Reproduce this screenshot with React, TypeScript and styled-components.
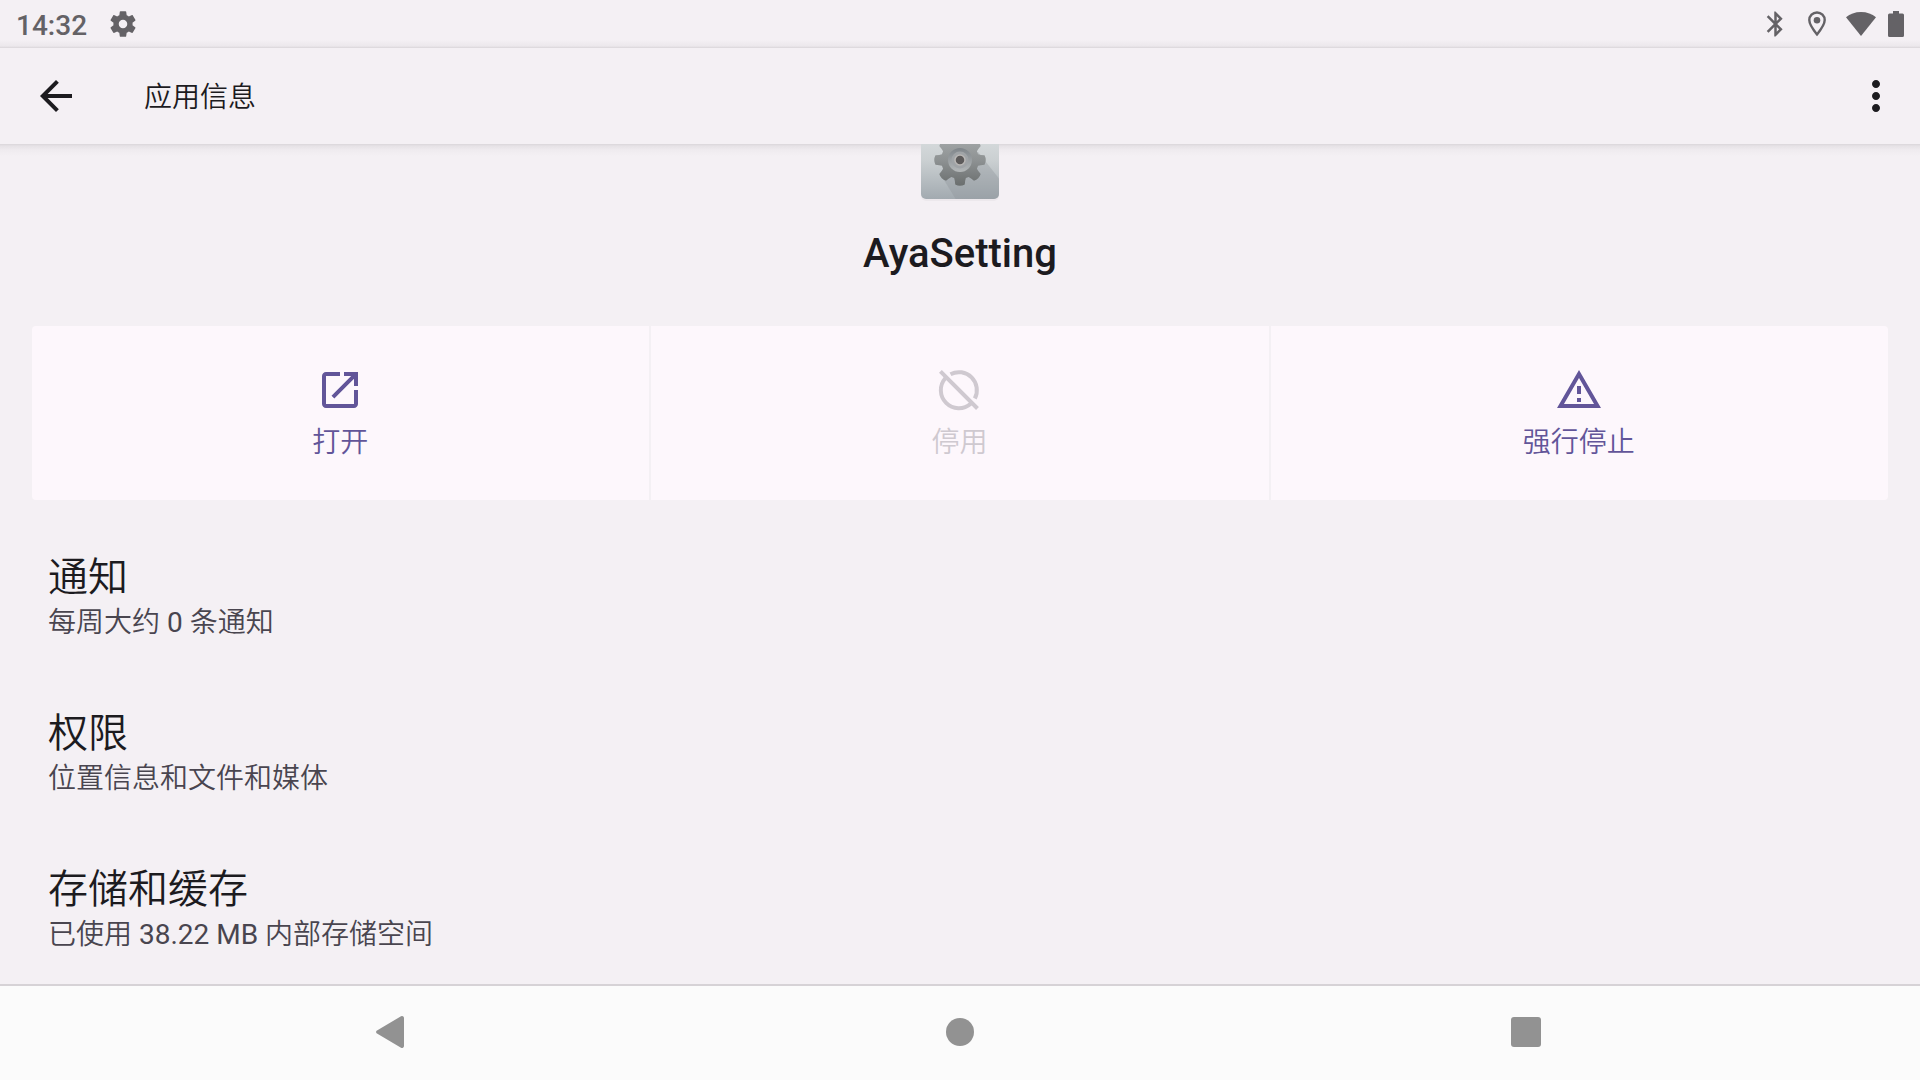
import React from "react";
import styled, { createGlobalStyle } from "styled-components";

const GlobalStyle = createGlobalStyle`
  * { box-sizing: border-box; }
  html, body, #root { height: 100%; margin: 0; }
  body {
    background: #f4f0f4;
    color: #1c1b1f;
    font-family: Roboto, "Noto Sans CJK SC DemiLight", "Noto Sans CJK SC", sans-serif;
  }
  button { font: inherit; color: inherit; background: none; border: 0; padding: 0; }
  svg { display: block; flex: none; }
`;

const Screen = styled.div`
  display: flex;
  flex-direction: column;
  height: 100vh;
  overflow: hidden;
`;

const StatusBar = styled.header`
  display: flex;
  align-items: center;
  justify-content: space-between;
  flex: none;
  height: 48px;
  padding: 0 16px;
  color: #646266;
  background: linear-gradient(#f4f0f4 40px, #ece8ec 46px, #d9d5d9 48px);
`;

const StatusGroup = styled.div<{ $gap: number }>`
  display: flex;
  align-items: center;
  gap: ${(p) => p.$gap}px;
`;

const Clock = styled.time`
  font-size: 28px;
  font-weight: 500;
  line-height: 32px;
  padding-top: 4px;
`;

const AppBar = styled.nav`
  display: flex;
  align-items: center;
  flex: none;
  height: 96px;
  padding: 0 20px 0 32px;
`;

const BarTitle = styled.h1`
  flex: 1;
  margin: 0;
  padding: 4px 0 0 64px;
  font-size: 28px;
  font-weight: 350;
  line-height: 40px;
`;

const IconButton = styled.button`
  display: flex;
  align-items: center;
  justify-content: center;
  width: 48px;
  height: 48px;
`;

const Content = styled.main`
  flex: 1;
  min-height: 0;
  overflow: hidden;
  padding: 0 32px;
  background: linear-gradient(#dad6da 0, #e6e2e6 2px, #efebef 6px, #f4f0f4 12px);
`;

const AppHeader = styled.section`
  display: flex;
  flex-direction: column;
  align-items: center;
`;

const IconWindow = styled.div`
  display: flex;
  align-items: flex-end;
  height: 64px;
  overflow: hidden;
`;

const AppName = styled.h2`
  margin: 20px 0 46px;
  font-size: 40px;
  font-weight: 500;
  line-height: 52px;
`;

const Actions = styled.div`
  display: grid;
  grid-template-columns: repeat(3, 1fr);
  gap: 2px;
  height: 174px;
  border-radius: 4px;
  overflow: hidden;
`;

const Action = styled.button`
  && { padding: 40px 1px 0 0; }
  display: flex;
  flex-direction: column;
  align-items: center;
  background: #fdf7fc;
  color: #625599;
  font-size: 28px;
  font-weight: 350;
  line-height: 42px;
  gap: 8px;

  &:disabled { color: #cfc9d0; }
`;

const Preferences = styled.ul`
  list-style: none;
  margin: 0;
  padding: 22px 0 0;
`;

const Preference = styled.li`
  padding: 32px 16px;
  height: 156px;
`;

const PrefTitle = styled.div`
  font-size: 40px;
  font-weight: 350;
  line-height: 48px;
`;

const PrefSummary = styled.div`
  font-size: 28px;
  line-height: 42px;
  color: #49454f;
`;

const NavBar = styled.footer`
  display: flex;
  align-items: center;
  justify-content: center;
  flex: none;
  height: 96px;
  padding-bottom: 2px;
  border-top: 2px solid #d6d2d6;
  background: #fbfbfb;
  color: #929292;
`;

const NavButton = styled.button`
  display: flex;
  align-items: center;
  justify-content: center;
  width: 29.5%;
  height: 100%;
`;

const GlyphSvg = styled.svg.attrs<{ $size: number }>((p) => ({
  viewBox: "0 0 24 24",
  width: p.$size,
  height: p.$size,
  fill: "currentColor",
  "aria-hidden": true,
}))<{ $size: number }>``;

const Glyph = ({ d, size = 48 }: { d: string; size?: number }) => (
  <GlyphSvg $size={size}><path d={d} /></GlyphSvg>
);

const paths = {
  gear: "M19.14 12.94c.04-.3.06-.61.06-.94 0-.32-.02-.64-.07-.94l2.03-1.58c.18-.14.23-.41.12-.61l-1.92-3.32c-.12-.22-.37-.29-.59-.22l-2.39.96c-.5-.38-1.03-.7-1.62-.94l-.36-2.54c-.04-.24-.24-.41-.48-.41h-3.84c-.24 0-.43.17-.47.41l-.36 2.54c-.59.24-1.13.57-1.62.94l-2.39-.96c-.22-.08-.47 0-.59.22L2.74 8.87c-.12.21-.08.47.12.61l2.03 1.58c-.05.3-.09.63-.09.94s.02.64.07.94l-2.03 1.58c-.18.14-.23.41-.12.61l1.92 3.32c.12.22.37.29.59.22l2.39-.96c.5.38 1.03.7 1.62.94l.36 2.54c.05.24.24.41.48.41h3.84c.24 0 .44-.17.47-.41l.36-2.54c.59-.24 1.13-.56 1.62-.94l2.39.96c.22.08.47 0 .59-.22l1.92-3.32c.12-.22.07-.47-.12-.61l-2.01-1.58zM12 15.2c-1.76 0-3.2-1.44-3.2-3.2s1.44-3.2 3.2-3.2 3.2 1.44 3.2 3.2-1.44 3.2-3.2 3.2z",
  back: "M20 11H7.83l5.59-5.59L12 4l-8 8 8 8 1.41-1.41L7.83 13H20v-2z",
  more: "M12 8c1.1 0 2-.9 2-2s-.9-2-2-2-2 .9-2 2 .9 2 2 2zm0 2c-1.1 0-2 .9-2 2s.9 2 2 2 2-.9 2-2-.9-2-2-2zm0 6c-1.1 0-2 .9-2 2s.9 2 2 2 2-.9 2-2-.9-2-2-2z",
  bluetooth: "M17.71 7.71L12 2h-1v7.59L6.41 5 5 6.41 10.59 12 5 17.59 6.41 19 11 14.41V22h1l5.71-5.71-4.3-4.29 4.3-4.29zM13 5.83l1.88 1.88L13 9.59V5.83zm1.88 10.46L13 18.17v-3.76l1.88 1.88z",
  open: "M12 3V5H5V19H19V12H21V19C21 20.1 20.1 21 19 21H5C3.9 21 3 20.1 3 19V5C3 3.9 3.9 3 5 3H12ZM14 3H21V10H19V6.41L9.17 16.24L7.76 14.83L17.59 5H14V3Z",
  warning: "M12 5.99L19.53 19H4.47L12 5.99M12 2L1 21h22L12 2zm1 14h-2v2h2v-2zm0-6h-2v4h2v-4z",
};

const BluetoothIcon = () => (
  <svg width="25" height="30" viewBox="2 0 20 24" fill="currentColor" aria-hidden="true">
    <path d={paths.bluetooth} />
  </svg>
);

const LocationIcon = () => (
  <svg width="18" height="26" viewBox="0 0 18 26" aria-hidden="true">
    <path d="M9 1.5c-4.300 0-7.700 3.300-7.700 7.600 0 5 7.700 14.300 7.700 14.300S16.700 14.100 16.700 9.100c0-4.300-3.400-7.600-7.700-7.600z" fill="none" stroke="currentColor" strokeWidth="2.400" />
    <circle cx="9" cy="9.200" r="3.300" fill="currentColor" />
  </svg>
);

const WifiIcon = () => (
  <svg width="30" height="26" viewBox="0 0 30 26" fill="currentColor" aria-hidden="true">
    <path d="M15 25 0 6.300C4 3 9 1 15 1s11 2 15 5.300z" />
  </svg>
);

const BatteryIcon = () => (
  <svg width="16" height="26" viewBox="0 0 16 26" fill="currentColor" aria-hidden="true">
    <path d="M5 0h6v2.500h3.500A1.500 1.500 0 0 1 16 4v20.500a1.500 1.500 0 0 1-1.500 1.500h-13A1.500 1.500 0 0 1 0 24.500V4a1.500 1.500 0 0 1 1.500-1.500H5z" />
  </svg>
);

const DisableIcon = () => (
  <svg width="48" height="48" viewBox="0 0 48 48" fill="none" stroke="currentColor" strokeWidth="4" aria-hidden="true">
    <path d="M5.400 5.400 42.500 42.500" />
    <path d="M15.500 8.200A18 18 0 0 1 39.800 32.500" />
    <path d="M10.300 12.300A18 18 0 0 0 35.700 37.700" />
  </svg>
);

const point = (radius: number, degrees: number) => {
  const k = (degrees * Math.PI) / 180;
  return `${(radius * Math.cos(k)).toFixed(2)} ${(radius * Math.sin(k)).toFixed(2)}`;
};

const cogPath =
  [0, 45, 90, 135, 180, 225, 270, 315]
    .map(
      (a) =>
        `${a ? "L" : "M"}${point(19, a - 18)}Q${point(21, a - 14)} ${point(25, a - 11)}` +
        `Q${point(27, a)} ${point(25, a + 11)}Q${point(21, a + 14)} ${point(19, a + 18)}`
    )
    .join("") + "Z";

const AppIcon = () => (
  <svg width="96" height="96" viewBox="0 0 96 96" role="img" aria-label="AyaSetting">
    <defs>
      <linearGradient id="tile" x1="0" y1="0" x2="0" y2="1">
        <stop offset="0" stopColor="#dfe3e4" />
        <stop offset=".5" stopColor="#cbd0d2" />
        <stop offset="1" stopColor="#a2aab0" />
      </linearGradient>
      <linearGradient id="cog" gradientUnits="userSpaceOnUse" x1="0" y1="-26" x2="0" y2="26">
        <stop offset="0" stopColor="#a8acad" />
        <stop offset=".5" stopColor="#8e9293" />
        <stop offset="1" stopColor="#6a6e6e" />
      </linearGradient>
      <linearGradient id="ring" x1="0" y1="0" x2="0" y2="1">
        <stop offset="0" stopColor="#7f858a" />
        <stop offset="1" stopColor="#b4b8b9" />
      </linearGradient>
      <clipPath id="tileShape"><rect x="9" y="9" width="78" height="78" rx="5" /></clipPath>
    </defs>
    <rect x="9" y="11" width="78" height="78" rx="5" fill="#000" opacity=".03" />
    <g clipPath="url(#tileShape)">
      <rect x="9" y="9" width="78" height="78" fill="url(#tile)" />
      <path d="M66 40 104 88 60 114 29 63z" fill="#8b9398" opacity=".35" />
      <g transform="translate(48 48)">
        <path d={cogPath} fill="url(#cog)" />
        <circle r="12" fill="url(#ring)" />
        <circle r="8.500" fill="#a0a4a7" />
        <circle r="5" fill="#5d5b5b" stroke="#b9b7b5" strokeWidth="1.500" />
      </g>
    </g>
  </svg>
);

const preferences = [
  { title: "通知", summary: "每周大约 0 条通知" },
  { title: "权限", summary: "位置信息和文件和媒体" },
  { title: "存储和缓存", summary: "已使用 38.22 MB 内部存储空间" },
];

export default function App() {
  return (
    <Screen lang="zh-CN">
      <GlobalStyle />
      <StatusBar>
        <StatusGroup $gap={20}>
          <Clock>14:32</Clock>
          <Glyph d={paths.gear} size={32} />
        </StatusGroup>
        <StatusGroup $gap={20}>
          <BluetoothIcon />
          <LocationIcon />
          <StatusGroup $gap={12}>
            <WifiIcon />
            <BatteryIcon />
          </StatusGroup>
        </StatusGroup>
      </StatusBar>
      <AppBar>
        <IconButton aria-label="返回"><Glyph d={paths.back} /></IconButton>
        <BarTitle>应用信息</BarTitle>
        <IconButton aria-label="更多选项"><Glyph d={paths.more} /></IconButton>
      </AppBar>
      <Content>
        <AppHeader>
          <IconWindow><AppIcon /></IconWindow>
          <AppName>AyaSetting</AppName>
        </AppHeader>
        <Actions>
          <Action><Glyph d={paths.open} />打开</Action>
          <Action disabled><DisableIcon />停用</Action>
          <Action><Glyph d={paths.warning} />强行停止</Action>
        </Actions>
        <Preferences>
          {preferences.map((p) => (
            <Preference key={p.title}>
              <PrefTitle>{p.title}</PrefTitle>
              <PrefSummary>{p.summary}</PrefSummary>
            </Preference>
          ))}
        </Preferences>
      </Content>
      <NavBar>
        <NavButton aria-label="返回">
          <svg width="36" height="32" viewBox="0 0 36 32" fill="currentColor" aria-hidden="true">
            <path d="M25 .300a2 2 0 0 1 3 1.700v28a2 2 0 0 1-3 1.700L1 17.500a1.700 1.700 0 0 1 0-3z" />
          </svg>
        </NavButton>
        <NavButton aria-label="主屏幕">
          <svg width="28" height="28" viewBox="0 0 28 28" fill="currentColor" aria-hidden="true">
            <circle cx="14" cy="14" r="14" />
          </svg>
        </NavButton>
        <NavButton aria-label="概览">
          <svg width="30" height="30" viewBox="0 0 30 30" fill="currentColor" aria-hidden="true">
            <rect width="30" height="30" rx="3" />
          </svg>
        </NavButton>
      </NavBar>
    </Screen>
  );
}
